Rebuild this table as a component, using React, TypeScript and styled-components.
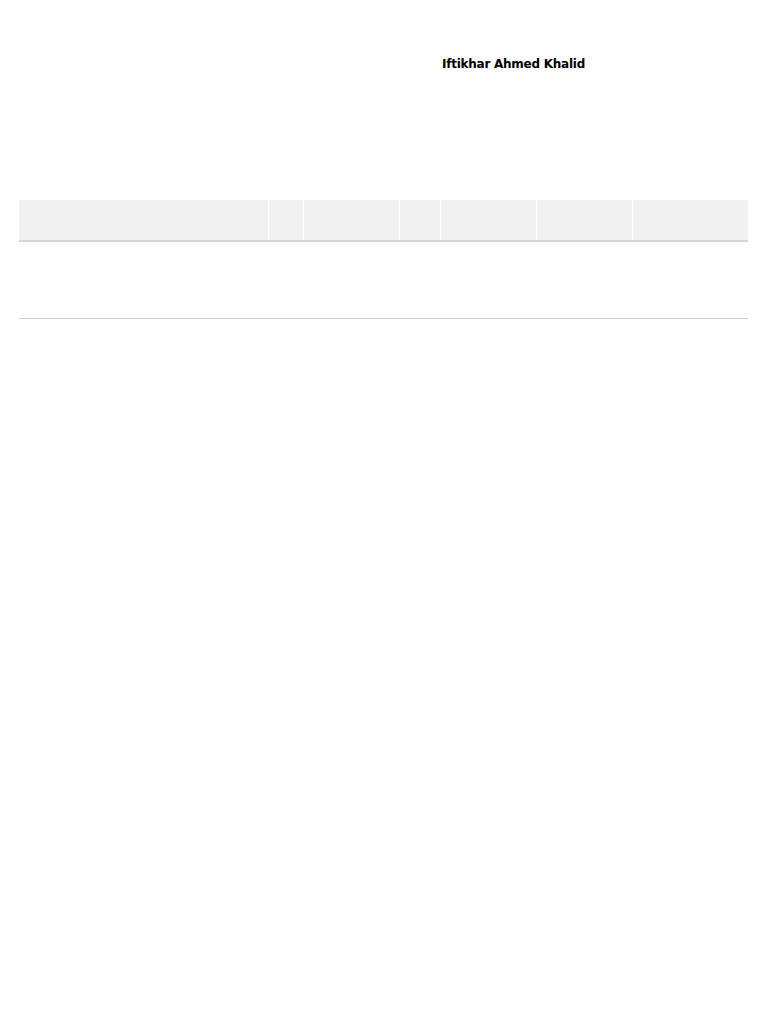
import React from "react";
import styled, { createGlobalStyle } from "styled-components";

const GlobalStyle = createGlobalStyle`
	body {
		margin: 0;
		background: #fefefe;
		font-family: "DejaVu Sans", Verdana, sans-serif;
	}
`;

const Page = styled.div`
	padding: 0 20px 0 19px;
`;

const TopBar = styled.div`
	height: 200px;
	box-sizing: border-box;
	padding: 57px 0 0 423px;
`;

const UserName = styled.div`
	font-size: 12px;
	letter-spacing: -0.25px;
	font-weight: bold;
	color: #000;
`;

const COLUMNS = "250px 35px 96px 41px 96px 96px 115px";

const HeaderRow = styled.div`
	display: grid;
	grid-template-columns: ${COLUMNS};
	height: 40px;
	border-bottom: 2px solid #d6d6d6;
`;

const HeaderCell = styled.div<{ $last?: boolean }>`
	background: #f1f1f1;
	border-right: ${(p) => (p.$last ? "none" : "1px solid #ffffff")};
`;

const BodyRow = styled.div`
	height: 76px;
	border-bottom: 1px solid #cfcfcf;
`;

const headers = ["", "", "", "", "", "", ""];

export default function App() {
	return (
		<Page>
			<GlobalStyle />
			<TopBar>
				<UserName>Iftikhar Ahmed Khalid</UserName>
			</TopBar>
			<HeaderRow>
				{headers.map((h, i) => (
					<HeaderCell key={i} $last={i === headers.length - 1}>
						{h}
					</HeaderCell>
				))}
			</HeaderRow>
			<BodyRow />
		</Page>
	);
}
